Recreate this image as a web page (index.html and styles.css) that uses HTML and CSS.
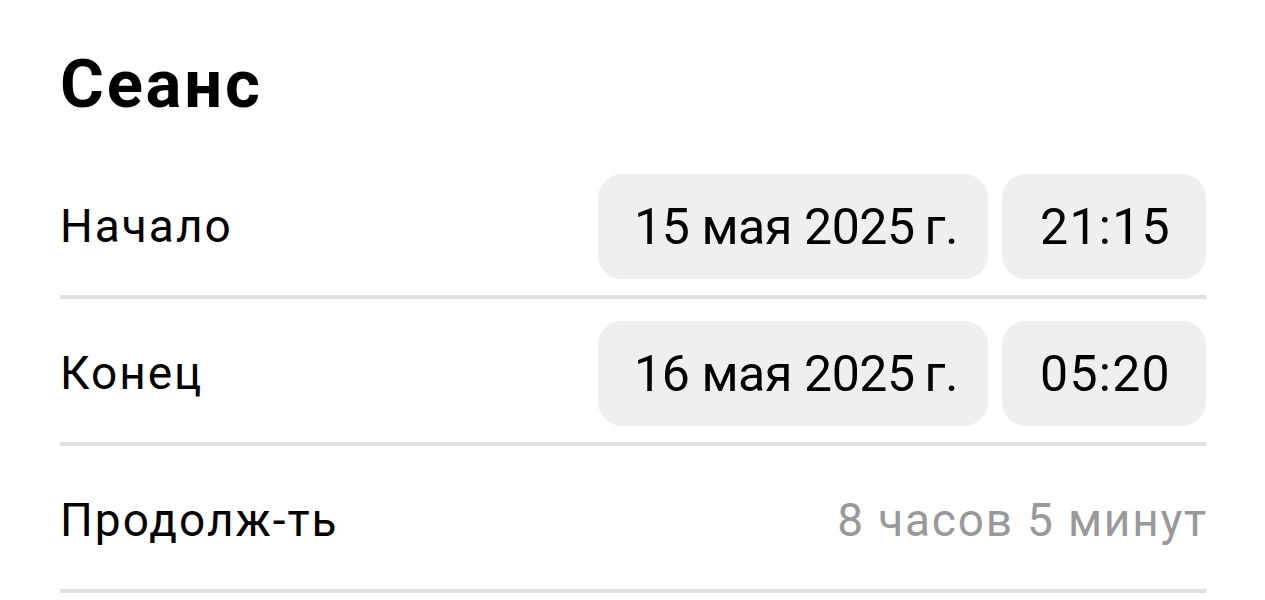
FILE: index.html
```html
<!DOCTYPE html>
<html lang="ru">
<head>
<meta charset="utf-8">
<link rel="stylesheet" href="styles.css">
</head>
<body>
<div class="page">
  <h1 class="title">Сеанс</h1>
  <div class="row">
    <div class="label">Начало</div>
    <div class="controls">
      <div class="pill date">15 мая 2025&#8201;г.</div>
      <div class="pill time">21:15</div>
    </div>
  </div>
  <div class="row">
    <div class="label">Конец</div>
    <div class="controls">
      <div class="pill date">16 мая 2025&#8201;г.</div>
      <div class="pill time">05:20</div>
    </div>
  </div>
  <div class="row">
    <div class="label">Продолж-ть</div>
    <div class="value">8 часов 5 минут</div>
  </div>
</div>
</body>
</html>
```
FILE: styles.css
```css
html, body {
  margin: 0;
  padding: 0;
  background: #ffffff;
}
body {
  font-family: Roboto, "Liberation Sans", sans-serif;
  color: #000;
}
.page {
  padding: 0 59px 0 60px;
}
.title {
  margin: 0 0 34px 0;
  padding-top: 51px;
  font-size: 67px;
  line-height: 67px;
  font-weight: 700;
  letter-spacing: 2.8px;
}
.row {
  display: flex;
  align-items: center;
  justify-content: space-between;
  padding: 22px 0 16px 0;
  min-height: 105px;
  border-bottom: 4px solid #e0e0e0;
}
.label {
  font-size: 46px;
  line-height: 105px;
  letter-spacing: 2px;
}
.controls {
  display: flex;
  gap: 14px;
}
.pill {
  height: 105px;
  border-radius: 24px;
  background: #efefef;
  display: flex;
  align-items: center;
  justify-content: center;
  font-size: 50px;
  box-sizing: border-box;
}
.date {
  width: 390px;
  letter-spacing: -0.4px;
  padding-left: 6px;
}
.time {
  width: 204px;
  letter-spacing: 1.3px;
  padding-left: 3px;
}
.value {
  font-size: 46px;
  color: #999999;
  letter-spacing: 1.8px;
  line-height: 105px;
  margin-right: -2px;
}
```
